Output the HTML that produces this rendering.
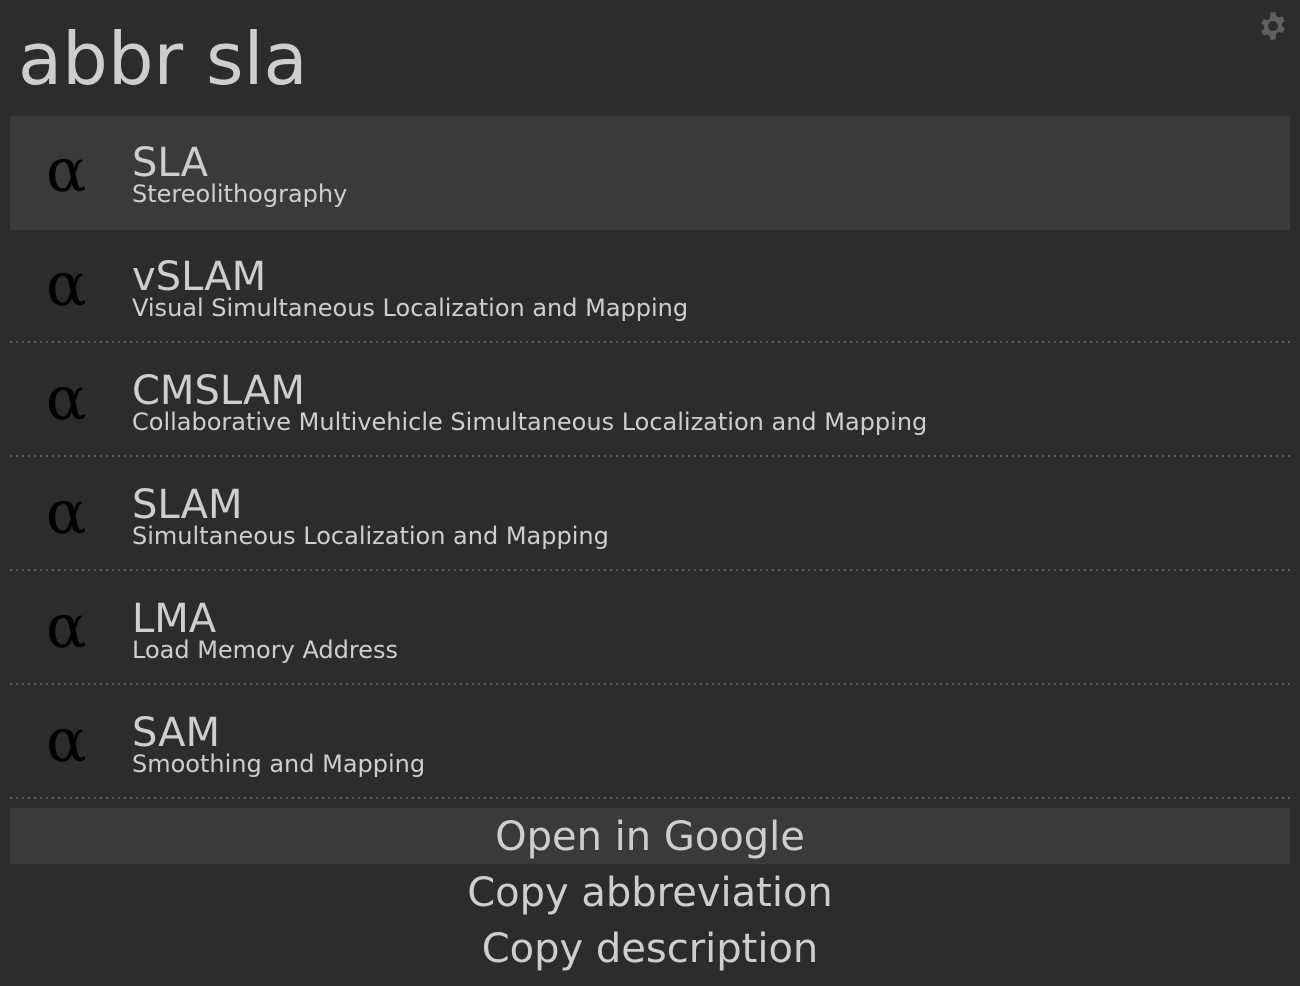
<!DOCTYPE html>
<html><head><meta charset="utf-8"><style>
html,body{margin:0;padding:0}
body{width:1300px;height:986px;background:#2c2c2c;position:relative;overflow:hidden;font-family:"DejaVu Sans","Liberation Sans",sans-serif;color:#cecece}
.t{position:absolute;white-space:nowrap;line-height:1.164}
.q{left:18px;top:18px;font-size:72px}
.row{position:absolute;left:10px;width:1280px;height:114px}
.row.sel{background:#3a3a3a}
.sep{position:absolute;left:10px;width:1280px;height:2px;background-image:linear-gradient(to right,#5a5a5a 2px,transparent 2px);background-size:6px 2px}
.a{position:absolute;left:36px;top:21px;font-family:"DejaVu Serif",serif;font-size:60px;line-height:1.164;color:#000}
.n{position:absolute;left:122px;top:24px;font-size:40px;line-height:1.164}
.d{position:absolute;left:122px;top:65px;font-size:24px;line-height:1.164}
.b{position:absolute;left:10px;width:1280px;text-align:center;font-size:40px;line-height:1.164}
.bsel{position:absolute;left:10px;top:808px;width:1280px;height:56px;background:#3a3a3a}
</style></head><body>
<div class="t q">abbr sla</div>
<svg style="position:absolute;left:1258px;top:11px" width="30" height="30" viewBox="0 0 24 24"><path fill="#5f5f5f" fill-rule="evenodd" d="M10 1h4l.6 3a8 8 0 0 1 2 1.2l2.9-1 2 3.5-2.3 2a8 8 0 0 1 0 2.4l2.3 2-2 3.5-2.9-1a8 8 0 0 1-2 1.2L14 23h-4l-.6-3a8 8 0 0 1-2-1.2l-2.9 1-2-3.5 2.3-2a8 8 0 0 1 0-2.4l-2.3-2 2-3.5 2.9 1a8 8 0 0 1 2-1.2z M12 8a4 4 0 1 0 0 8a4 4 0 1 0 0-8z"/></svg>

<div class="row sel" style="top:116px"><div class="a">α</div><div class="n">SLA</div><div class="d">Stereolithography</div></div>
<div class="row" style="top:230px"><div class="a">α</div><div class="n">vSLAM</div><div class="d">Visual Simultaneous Localization and Mapping</div></div>
<div class="sep" style="top:341px"></div>
<div class="row" style="top:344px"><div class="a">α</div><div class="n">CMSLAM</div><div class="d">Collaborative Multivehicle Simultaneous Localization and Mapping</div></div>
<div class="sep" style="top:455px"></div>
<div class="row" style="top:458px"><div class="a">α</div><div class="n">SLAM</div><div class="d">Simultaneous Localization and Mapping</div></div>
<div class="sep" style="top:569px"></div>
<div class="row" style="top:572px"><div class="a">α</div><div class="n">LMA</div><div class="d">Load Memory Address</div></div>
<div class="sep" style="top:683px"></div>
<div class="row" style="top:686px"><div class="a">α</div><div class="n">SAM</div><div class="d">Smoothing and Mapping</div></div>
<div class="sep" style="top:797px"></div>

<div class="bsel"></div>
<div class="b" style="top:814px">Open in Google</div>
<div class="b" style="top:870px">Copy abbreviation</div>
<div class="b" style="top:926px">Copy description</div>
</body></html>
